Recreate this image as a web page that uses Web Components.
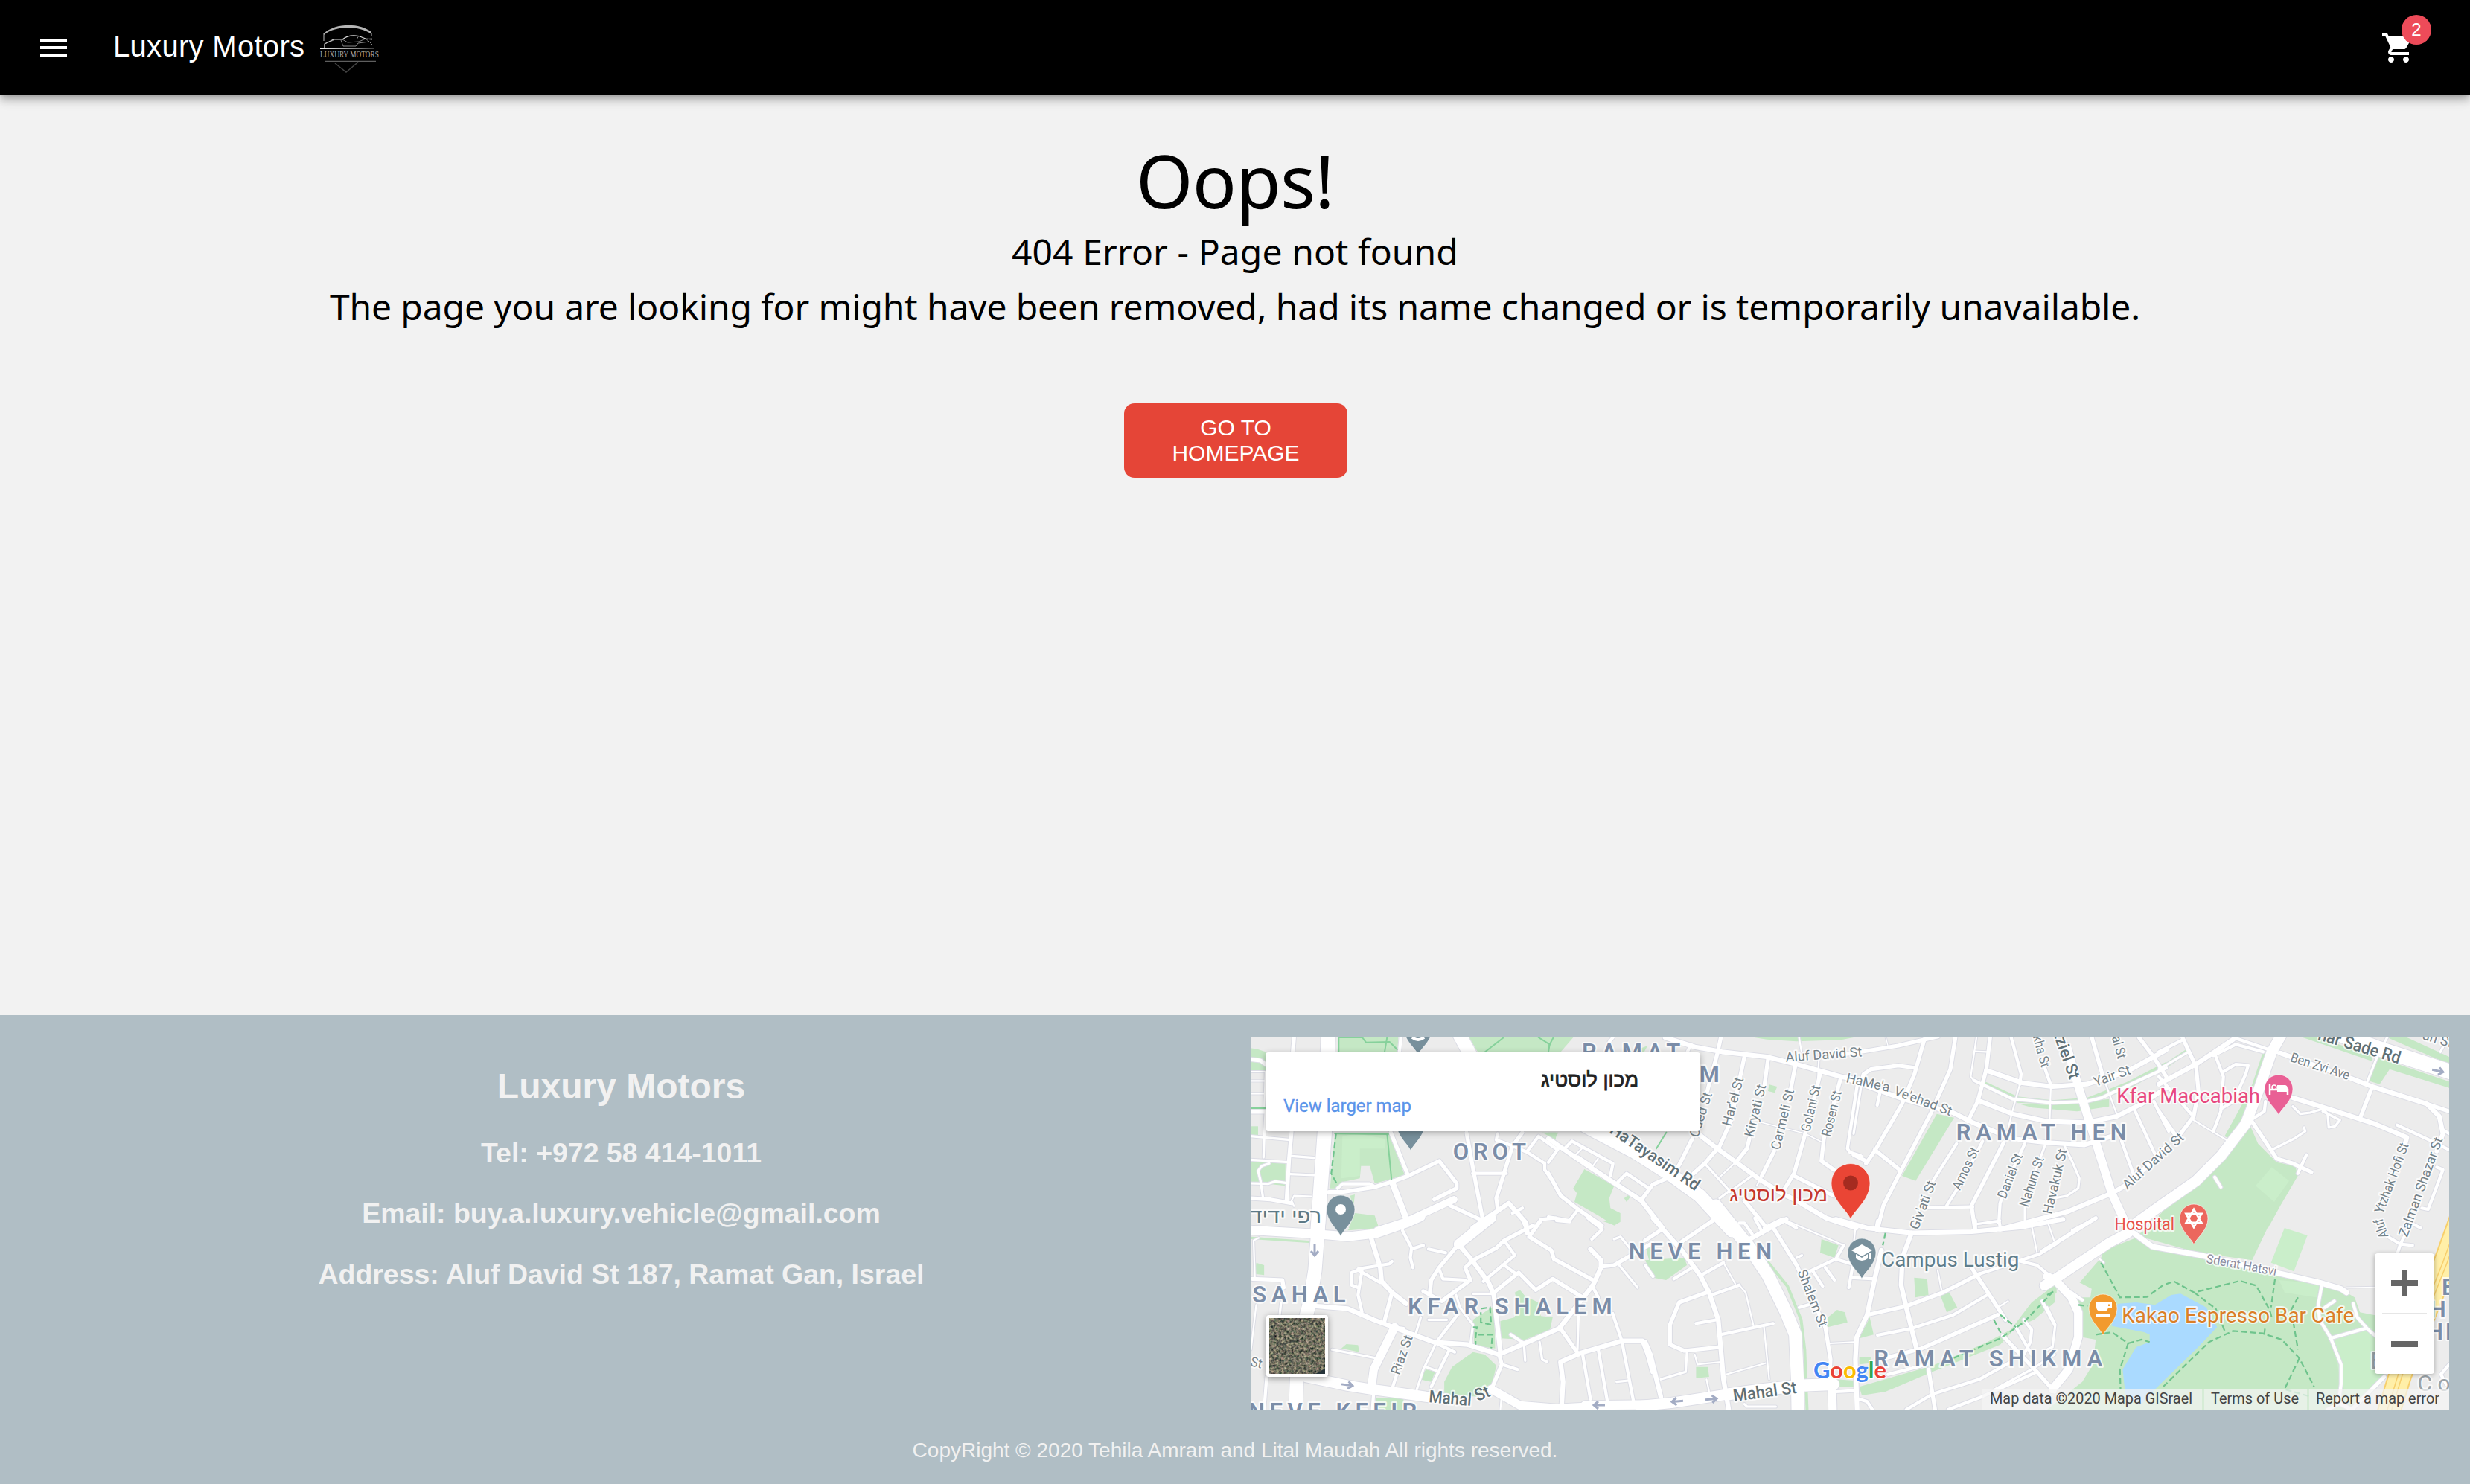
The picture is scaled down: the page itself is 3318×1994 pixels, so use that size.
<!DOCTYPE html>
<html lang="en">
<head>
<meta charset="utf-8">
<title>Luxury Motors</title>
<style>
html,body{margin:0;padding:0;background:#f2f2f2}
body{font-family:"Liberation Sans",Arial,sans-serif}
</style>
</head>
<body>
<lux-page></lux-page>
<script>
const define=(name,html,setup)=>customElements.define(name,class extends HTMLElement{
  constructor(){super();this.attachShadow({mode:'open'}).innerHTML=html;}
  connectedCallback(){if(setup)setup(this.shadowRoot,this);}
});

/* ---------- header ---------- */
define('lux-logo',`<style>:host{display:block;width:80px;height:68px}svg{display:block;overflow:visible}</style>
<svg width="80" height="68" viewBox="0 0 80 68" fill="none">
<defs><linearGradient id="l"><stop offset="0" stop-color="#eee"/><stop offset="1" stop-color="#555"/></linearGradient></defs>
<path d="M5 22V12M69 11v5" stroke="#777" stroke-width="1.600"/>
<path d="M5 12C20-2 52-3 69 10L69 13C52 1 21 1 5 14Z" fill="#b5b5b5"/>
<path d="M6 31V26L18 20 30 20C36 15 44 14 52 15.500L61 19 70 20" stroke="#ddd" stroke-width="1.200"/>
<path d="M6 26 18 21M62 19.500 70 19M30 20 37 24 52 23 61 19M28 21 31 29 48 29 51 25 66 23 71 28M52 15 49 20M61 19 66 23" stroke="#aaa" stroke-width=".8"/>
<path d="M0 31.200 72 32.200 72 33 0 33Z" fill="url(#l)"/>
<path d="M7 49.300H75" stroke="#777" stroke-width="1"/>
<path d="M20 52 35 64 51 50.500" stroke="#444" stroke-width="1.500"/>
<text x="0" y="44" font-family="Liberation Serif,serif" font-size="11.500" fill="#a9a9a9" textLength="79" lengthAdjust="spacingAndGlyphs">LUXURY MOTORS</text>
</svg>`);

define('lux-cart',`<style>:host{display:block;position:relative;width:48px;height:48px}
svg{display:block;width:48px;height:48px}
.b{position:absolute;left:28px;top:-20px;width:40px;height:40px;border-radius:50%;background:#ed4b59;color:#fff;font-size:24px;line-height:40px;text-align:center}</style>
<svg viewBox="0 0 24 24" fill="#fff"><path d="M7 18c-1.100 0-1.990.9-1.990 2S5.900 22 7 22s2-.9 2-2-.9-2-2-2zM1 2v2h2l3.600 7.590-1.350 2.450c-.16.280-.25.610-.25.960 0 1.100.9 2 2 2h12v-2H7.420c-.14 0-.25-.11-.25-.25l.03-.12.900-1.630h7.450c.75 0 1.410-.41 1.750-1.030l3.580-6.490c.08-.14.120-.31.120-.48 0-.55-.45-1-1-1H5.210l-.94-2H1zm16 16c-1.100 0-1.990.9-1.990 2s.89 2 1.990 2 2-.9 2-2-.9-2-2-2z"/></svg>
<div class="b"><slot></slot></div>`);

define('lux-header',`<style>:host{display:flex;align-items:center;height:128px;background:#000;color:#fff;box-sizing:border-box;padding:0 72px 0 48px;position:relative;
box-shadow:0 4px 8px -2px rgba(0,0,0,.2),0 8px 10px rgba(0,0,0,.14),0 2px 20px rgba(0,0,0,.12)}
.m{width:48px;height:48px;margin-right:56px}
.t{font-size:40px;letter-spacing:.3px;line-height:64px;margin-top:-4px}
lux-logo{margin:6px auto 0 21px}</style>
<svg class="m" viewBox="0 0 24 24" fill="#fff"><path d="M3 18h18v-2H3v2zm0-5h18v-2H3v2zm0-7v2h18V6H3z"/></svg>
<div class="t">Luxury Motors</div><lux-logo></lux-logo><lux-cart>2</lux-cart>`);

/* ---------- 404 message ---------- */
define('fit-line',`<style>:host{display:block;text-align:center;white-space:nowrap;font-family:"Noto Sans","Open Sans",sans-serif;color:#000}span{display:inline-block}</style><span><slot></slot></span>`,
(r,h)=>{const s=r.querySelector('span'),w=+h.getAttribute('width'),n=h.textContent.length;
 const ls=(w-s.getBoundingClientRect().width)/n;s.style.letterSpacing=ls+'px';});

define('not-found',`<style>:host{display:flex;flex-direction:column;align-items:center;height:1236px;box-sizing:border-box;padding-top:57px}
.a{font-size:98px;line-height:114px;height:114px}.b,.c{font-size:48px;line-height:74px;height:74px}.b{margin-top:2px}
a{display:flex;align-items:center;justify-content:center;box-sizing:border-box;width:300px;height:100px;margin:93px 0 0 2px;padding:0 40px;border-radius:14px;background:#e54537;color:#fff;font-size:30px;line-height:34px;text-align:center;text-decoration:none}</style>
<fit-line class="a" width="266">Oops!</fit-line>
<fit-line class="b" width="600">404 Error - Page not found</fit-line>
<fit-line class="c" width="2432">The page you are looking for might have been removed, had its name changed or is temporarily unavailable.</fit-line>
<a>GO TO HOMEPAGE</a>`);

/* ---------- map ---------- */
/* each sheet: x offset, y offset, x scale, y scale into map pixels */
const SHEET={A:[-10,-14,1/3,1/3],B:[400,-14,1/3,1/3],C:[810,-14,1/3,1/3],D:[1220,-14,1/3,1/3],
E:[-10,246,.35077,1/3],F:[530,246,.35077,1/3],G:[1070,246,.36224,1/3]};
const pt=(s,x,y)=>{const t=SHEET[s];return[+(t[0]+x*t[2]).toFixed(1),+(t[1]+y*t[3]).toFixed(1)];};
const poly=(s,d)=>d.trim().split(/\s+/).map(p=>pt(s,...p.split(',').map(Number)).join()).join(' ');

const GREEN={
A:`30,85 60,90 90,100 90,175 30,175|385,42 625,42 622,100 380,100|910,42 1260,42 1260,100 945,100|30,400 60,400 60,440 30,440|30,540 170,545 170,640 30,625|370,425 585,425 650,595 600,612 530,630 510,560 475,560 470,610 400,625 375,650 350,650|425,810 450,750 530,760 545,810|1205,425 1260,425 1260,455|430,680 450,675 445,720`,
B:`0,42 100,42 50,100 0,100|830,42 1230,42 1180,52 1000,58 880,50|145,420 210,425 480,600 480,615 380,540 300,490|145,573 265,640 245,690 250,730 290,750 290,785 265,800 210,765 105,705 115,670 100,650|0,425 40,425 25,455 0,445|890,232 922,240 912,265 885,258|305,690 325,675 330,685 315,705|375,85 400,75 380,110`,
C:`335,350 405,365 250,620 195,600|530,220 660,280 800,295 940,285 1100,222 1260,140 1260,165 1100,255 940,310 800,312 660,305 530,245|660,308 800,315 1030,290 1030,320 900,340 720,325|950,395 965,395 960,430|1240,770 1260,755 1260,780`,
D:`360,380 400,470 475,545 550,560 560,600 490,720 440,810 0,810 0,760 100,660 200,600 300,480|420,100 370,250 265,440 285,450 400,260 440,120|580,42 640,42 860,115 860,138|875,120 1170,220 1170,245 930,170 890,230 840,215 860,150|920,42 1000,42 1170,120 1170,150|5,160 110,90 110,110 10,180`,
E:`400,40 430,0 510,0 520,30|30,65 300,85 250,90 30,75|50,170 80,180 80,220 45,215|376,515 395,498 440,502 445,530|985,405 1040,390 1050,330 1040,290 1060,280 1080,305 1130,330 1140,385 1185,390 1175,440 1080,480 985,475|880,400 960,345 965,515 885,505|880,530 925,540 970,585 950,670 900,710 770,700 770,650 800,590|675,640 700,600 735,610 720,650|505,715 615,715 610,762 520,762|1370,0 1445,0 1420,18|1540,100 1568,110 1568,220`,
F:`0,160 150,150 160,180 80,240 30,230|675,75 740,100 725,150 670,130|700,390 735,360 765,370 775,410 700,430|860,390 875,460 820,475|1030,230 1080,235 1085,300 1035,310|1130,300 1165,290 1195,350 1155,370|195,590 240,590 245,630 195,635|830,705 820,670 1100,585 1300,495 1400,440 1480,330 1568,260 1568,330 1490,400 1420,430 1360,500 1100,610 920,690|820,550 865,550 860,575 820,580|730,640 800,645 800,670 735,670`,
G:`330,60 430,0 830,0 760,160 560,130|340,65 390,110 560,150 850,210 1010,250 1110,290 1140,310 1160,370 1230,385 1230,640 1130,762 0,762 130,650 170,580 180,480 130,470 110,330 120,310 160,310 165,275 120,250 200,150 210,120|0,280 35,270 35,290 0,330`};
const LIGHT={A:`400,440 460,430 570,450 570,490 470,490 470,600 395,610`,D:`455,565 525,620 465,705 390,640`,
G:`880,30 965,60 915,205 830,170|860,240 1010,255 1000,310 880,290|1055,480 1200,430 1250,500 1250,620 1130,762 1090,650`};
const WATER={G:`265,335 330,330 400,340 460,300 495,295 590,350 630,430 560,510 400,680 350,740 290,700 280,600 330,510 380,490 380,460 360,450 240,425 250,345`};
/* width in pixels, then the points of the line */
const ROADS={
A:`20 343,30 328,430 308,700 300,820|6 205,42 200,100|6 30,130 70,135 90,150|3 30,180 90,180|3 30,217 90,217|3 30,268 90,268|3 90,180 85,320|6 30,342 90,342|4 90,350 85,440 82,525|6 195,420 185,530 175,700|4 30,440 190,455|4 30,535 185,545|6 30,690 110,695 195,710|4 195,520 285,527|4 190,593 285,597|3 205,722 195,700 205,680 275,683|4 30,630 100,632 130,622 170,628|4 80,690 70,620 60,580 75,560 105,550|5 635,42 630,100|19 855,0 925,130|6 595,425 665,600|6 345,665 400,665 530,645 610,620 665,600 790,540 860,630 860,650 770,695|5 380,650 400,632 510,632 525,640|9 600,625 660,780|10 540,820 660,782 850,695|6 900,425 930,590 965,775|5 925,590 1060,590|6 1125,425 1085,480 1020,690 1025,730|5 1025,430 1020,455 1075,475 1145,505|5 1145,500 1190,440 1260,490|5 1145,505 1215,550 1215,575 1260,640|6 835,720 965,780|7 925,810 1070,710 1140,790 1145,830|5 1085,750 1125,730|5 1175,810 1200,775 1260,770`,
B:`19 150,400 350,505 500,600 610,680 740,820|7 470,42 590,80 700,100 880,120 1000,150 1180,200 1260,215|6 695,42 680,110 640,260|5 575,70 560,100|6 790,120 735,380 690,480 630,550 585,590|6 885,130 870,240|6 810,450 800,490 760,540|3 760,540 690,605|6 995,155 975,260|6 910,500 860,600|3 860,600 840,640|3 1090,130 1085,240|6 1095,190 1035,430 990,590 950,655|6 1180,200 1110,450 1100,540 1150,575|5 1245,230 1205,490 1215,505 1260,520|7 610,435 680,490 860,620 940,670 1000,700 1120,770 1240,810|2.5 860,385 1035,430 1105,465|4 630,550 730,660 690,690|4 820,600 730,665|6 990,600 1150,680|6 580,450 530,550 500,600 420,635 380,690|7 0,450 160,560 260,625 375,700 460,810|5 60,495 95,460 260,550 250,600|3 110,515 135,490|3 120,520 180,560 200,530|5 40,490 0,545|5 280,625 315,590 405,650|6 0,590 50,680 120,735 215,800|5 120,735 85,780 0,765|3 670,765 620,810|6 790,700 880,810|5 870,810 940,775 1000,810|3 1010,42 1020,100|5 260,42 245,60`,
C:`6 -40,110 40,98 180,75 340,38|2 130,42 138,75|6 285,50 245,190 195,310 85,500 50,550|6 410,42 390,170 310,350 185,590 120,720 95,820|6 30,230 40,190 70,170 180,155 250,165|4 30,240 0,430|5 105,270 95,315|6 0,515 50,540|6 85,495 185,575|6 550,42 535,170 500,300 460,380|3 495,42 472,200 485,215|5 485,215 640,290 800,305 940,300 1000,285 1150,215 1260,165|3 485,98 535,100|7 535,175 680,225 800,240 940,230 1100,180 1260,92|7 500,295 640,350 780,380 940,385 1060,360 1160,310 1260,245|5 635,42 675,190 670,230|3 670,230 640,340 625,400|5 765,150 795,235|3 795,235 790,380|6 960,42 1005,200|3 1005,200 1060,350|6 1150,42 1205,115 1260,200|7 -10,215 200,290 400,345 480,385 640,450 770,465 930,475 1040,440|12 860,80 900,220 940,350 1000,540 1040,670 1100,800|5 415,470 320,620|5 520,460 450,600 375,720|6 605,465 475,720 490,820|5 300,728 480,725|5 690,470 630,600 590,710 585,790|4 490,795 590,780|4 770,480 690,700 690,800|4 850,480 880,540 910,610 905,650 860,680 810,690|7 590,815 860,745 1040,670 1120,625 1260,480|5 1080,460 1130,600|5 1130,330 1220,525|5 1210,300 1270,420|4 880,820 965,775`,
D:`21 560,-30 700,18 880,85 1180,182|15 495,30 455,100 400,260 350,390 250,520 150,620 0,725 -90,790|6 95,42 150,160 160,260 140,360 80,440|5 0,100 100,50|7 0,230 150,150 300,50|4 0,170 120,100|5 220,115 310,70 420,100|5 300,42 500,110|5 230,120 260,200 250,340 220,420|5 260,180 310,150 360,155 350,190 300,300 250,330|5 0,200 130,350|6 0,340 70,440|3 140,375 280,460|7 490,105 770,205 860,240 1080,310 1130,360 1145,430 1120,500|6 1080,310 1170,340|4 880,120 840,220|6 860,240 810,370|4 920,42 905,70|7 540,285 700,335 870,390 1000,445 990,480|5 370,375 425,340 430,300|6 375,380 475,530 540,550 615,585|5 595,515 560,590|4 455,495 545,450 590,420 585,405|4 540,320 570,350 610,345 660,330 680,350 685,405 710,400 730,375 660,340|5 225,605 250,645|5 960,395 1100,460 1170,495|5 1145,415 1170,430|5 1120,565 1145,575 1085,735 1060,730|4 1135,100 1145,80`,
E:`13 20,38 250,52 400,65 510,52 630,8 680,-15|19 290,-10 275,200 255,330 230,430 205,640 200,775|6 35,235 150,240 155,270|3 45,240 40,80 60,70|3 50,340 30,520|4 145,330 140,380|7 280,345 400,355 500,400 600,440 730,490 860,500 980,540|15 240,630 400,665 490,680 600,695 700,710 780,720|12 490,680 500,600 580,430|7 490,70 525,190 530,245 570,290 625,335|5 525,250 440,200 415,210 415,260 440,270|5 570,165 560,175 440,195|5 455,200 440,300 455,370|6 570,290 540,410|5 580,430 615,435|5 610,40 645,110 640,150 650,190|5 645,115 690,100|5 710,115 775,130|6 825,95 750,190 720,240 715,290|14 825,95 950,-10|7 825,95 880,165 940,250 960,300 985,530|5 750,195 765,235 850,240|6 880,160 850,190 870,240 760,325 690,285|6 880,160 970,110 1000,80 1110,20|5 1000,80 1040,140 920,245|5 1000,180 1045,215|6 960,290 1055,210 1120,280 1185,235 1300,310|4 880,295 955,295|6 1140,0 1095,65 1180,120 1190,155 1340,240|5 1070,0 1095,60|5 1200,0 1250,5|5 1320,-10 1375,35 1335,75|7 1330,115 1370,160 1370,190 1340,260 1210,435 980,540|6 1375,185 1420,180 1568,90|4 1440,180 1510,270|4 1420,75 1445,65 1480,110|5 1335,260 1360,310|4 1285,370 1280,520|6 1215,435 1285,540|7 1220,740 1225,650 1215,570 1290,535 1450,485 1530,485 1550,540 1568,610|5 1300,540 1330,720|5 1360,520 1395,730|5 1415,375 1450,485 1495,730|4 1430,650 1475,645|6 980,540 990,580 955,670|5 990,580 1050,600|12 950,680 1060,745 1200,757 1320,750|13 1310,745 1568,742|4 1075,495 1080,565|4 1135,490 1145,560 1165,570|5 1025,460 1075,495|4 740,490 690,600 665,680|5 790,520 720,670|5 730,490 810,530|4 700,590 740,605|5 820,380 740,490|4 680,390 660,460|4 815,300 830,350 880,420 870,500|4 710,400 780,400|4 340,520 510,555|5 600,580 570,680|5 90,630 80,762|5 500,690 495,762|3 990,700 985,762`,
F:`18 270,-60 300,-20 400,110 470,220 540,370 575,460 583,640 585,775|15 -20,747 100,735 320,700|17 320,700 460,680 600,665 720,660|12 715,655 718,775|5 730,690 810,685|7 812,770 805,560 810,470 850,380 880,230 905,120|6 690,430 710,560 705,650|6 485,20 580,180 690,430|5 420,-10 450,50|7 400,75 540,-5|5 360,10 380,10 410,55|3 540,0 760,100|7 730,-5 850,30 1020,50 1250,45 1450,25 1600,-5|5 890,0 885,30|5 1265,0 1265,45|5 1355,0 1360,30|3 1265,15 1355,5|3 1480,20 1500,125|7 1020,50 985,150 980,260 1000,350 1040,520|6 850,380 1000,345 1140,290 1280,215|5 890,462 1020,435 1180,380 1310,300|6 920,555 1060,515 1200,450 1350,380|6 1250,190 1350,350 1380,400|3 1350,350 1390,325|5 1280,215 1440,160 1510,135 1580,90|5 1440,165 1500,180 1568,240|6 1370,465 1500,610 1568,690|5 1420,430 1480,540|5 1450,400 1480,440 1475,490 1450,540|5 1520,325 1568,420|5 930,620 1080,580|6 1085,600 1110,762|5 1000,762 1100,700 1280,640 1400,570|5 1160,762 1290,710 1500,610|4 1340,680 1480,600 1568,540|5 820,720 850,730 870,762|5 760,100 730,155 610,215|5 730,155 790,175|5 780,270 795,180|5 790,230 880,235|5 640,200 680,265|5 690,190 725,240|4 580,150 600,140|5 590,350 625,340|7 30,-10 140,120 210,220 245,290 280,400 300,640 320,762|6 0,80 65,35|6 140,85 260,0|5 215,220 300,170|5 255,300 360,260|3 360,260 385,290 415,425|6 235,290 130,330 95,420 95,500 150,525 285,510|5 195,415 275,400|5 290,460 490,415|3 455,430 475,640|4 160,530 155,610 60,640|3 190,540 200,580 290,570|3 310,620 460,575|7 0,490 20,540 60,710|5 0,180 30,225|5 110,235 180,190|4 380,740 390,750 500,750|3 300,170 345,255|3 805,30 800,80|3 705,495 800,490|3 1120,200 1135,280|3 235,640 245,690`,
G:`14 -10,262 30,235 230,90 300,50|6 -20,125 180,-10|3 0,0 25,80|8 320,50 390,105 570,140 850,210 1010,250 1090,275 1110,290|12 0,225 30,240 90,310 115,370 115,470 80,600 20,680|4 0,350 30,420 20,510 0,520|5 90,290 130,320|5 1020,250 1005,340 1010,400 1050,470 1090,580 1090,660 1080,740 1040,762|5 1050,475 1180,435|5 1135,335 1150,390 1190,440 1240,485|5 1030,350 1065,325|6 1090,740 1130,762 1250,630|2 1110,270 1220,268|5 1240,50 1310,95 1355,100|5 1295,145 1310,95 1350,10 1385,30|3 195,155 210,170|5 1491,580 1460,620 1480,660`};
const PATHS={A:`385,42 385,100|385,42 480,42 495,62 590,60 620,90|580,42 570,100|1050,42 975,100|1190,42 1235,70 1230,100|30,327 90,327|370,430 585,432|580,430 598,615`,
B:`475,425 435,490|0,80 20,42`};
const DASHES={A:`374,430 355,590 382,640`,
E:`910,355 945,350 950,420 910,410 910,370|880,430 895,430 890,470 890,500|900,460 955,460 950,515`,
F:`1180,555 1360,475 1450,410 1568,280|1335,400 1365,460|1360,380 1420,430|920,50 910,100`,
G:`200,170 270,310 370,308 430,260 470,245 545,290 715,243 775,262 825,360 835,400|545,290 625,355 660,450|845,235 830,350|430,670 600,490 690,445 800,455 870,480 935,555 990,670|930,310 905,360 930,520|935,555 880,680 970,708|180,460 240,450 300,495 270,600 272,680|300,495 350,480 380,490|115,340 150,345|805,460 808,430|0,300 25,285`};

const AREA='#7b8da8',STREET='#75838a',ROADNAME='#5f7076';
const between=(a,b)=>[...pt(...a),...pt(...b)];
/* text, baseline start and end, size, colour, weight */
const LABELS=[
['OROT',['A',845,535],['A',1140,535],31,AREA,600,1],['RAMAT',['B',135,133],['B',532,133],31,AREA,600,1],['M',['B',608,222],['B',675,222],31,AREA,600,1],
['RAMAT HEN',['C',413,457],['C',1100,457],31,AREA,600,1],['SAHAL',['E',35,330],['E',392,330],31,AREA,600,1],['KFAR SHALEM',['E',630,378],['E',1413,378],31,AREA,600,1],
['NEVE HEN',['E',1476,157],['F',485,157],31,AREA,600,1],['NEVE KFEIR',['E',20,802],['E',665,802],31,AREA,600,1],['RAMAT SHIKMA',['F',876,587],['G',205,587],31,AREA,600,1],
['E',['G',1463,300],['G',1510,300],31,AREA,600,1],['H',['G',1418,390],['G',1464,390],31,AREA,600,1],['HE',['G',1408,480],['G',1525,480],31,AREA,600,1],
['E',['G',1198,598],['G',1240,598],32,'#9ba3a8',400,1],['Co',['G',1373,688],['G',1495,688],30,'#9ba3a8',400,1],
['Aluf David St',['B',957,140],['C',35,118],18],["Har'el St",['B',735,402],['B',787,208],18],['Kiryati St',['B',826,446],['B',877,236],18],['Carmeli St',['B',932,498],['B',990,256],18],
['Golani St',['B',1053,425],['B',1097,240],18],['Rosen St',['B',1136,445],['B',1182,262],18],['Oded St',['B',603,448],['B',660,270],18],
['HaTayasim Rd',['B',243,424],['B',592,661],22,ROADNAME,500],["HaMe'a",['B',1198,222],['C',142,262],18],["Ve'ehad St",['C',160,272],['C',388,358],18],
["Giv'ati St",['F',1045,40],['C',332,628],18],['Amos St',['C',428,660],['C',507,496],18],['Daniel St',['C',613,695],['C',682,518],18],['Nahum St',['C',703,728],['C',767,530],18],['Havakuk St',['C',798,757],['C',860,496],18],
['Uzziel St',['C',788,-20],['C',870,214],22,ROADNAME,500],['kha St',['C',722,38],['C',757,165],18],['al St',['C',1040,42],['C',1065,130],18],['Yair St',['C',975,240],['C',1120,188],18],['Aluf David St',['C',1103,657],['D',105,450],18],
['Ben Zvi Ave',['D',527,138],['D',762,213],18],['har Sade Rd',['D',638,50],['D',967,148],23,ROADNAME,500],['an St',['D',1060,48],['D',1178,84],18],
['Ytzhak Hofi St',['D',903,755],['D',1008,475],18],['Aluf',['G',1266,64],['D',900,768],18],['Zalman Shazar St',['G',1335,70],['D',1145,452],18],
['Shalem St',['F',583,207],['F',667,432],18],['Mahal St',['F',340,730],['F',582,695],23,ROADNAME,500],['Mahal',['E',710,733],['E',872,747],23,ROADNAME,500],['St',['E',898,730],['E',950,706],23,ROADNAME,500],
['Riaz St',['E',598,625],['E',650,470],18],['St',['E',26,586],['E',68,596],18],['Sderat Hatsvi',['G',588,170],['G',848,222],17,'#8c8c9e'],
['Kfar Maccabiah',['C',1060,305],['D',408,305],27,'#e8487f',400],['Hospital',['G',250,40],['G',472,40],24,'#e8514a',400],['Campus Lustig',['F',904,186],['F',1432,186],27,'#607d8b',400],
['Kakao Espresso Bar Cafe',['G',277,412],['G',1138,412],27,'#db7f28',400],
['מכון לוסטיג',['B',730,702],['B',1125,702],27,'#c5372c',400],['רפי ידיד',['A',28,790],['A',315,790],27,'#5d7a87',400]];

const pin=(x,y,tip,r,c,icon='')=>{const h=tip-y;
 return `<path d="M${x} ${tip}C${x-r*.25} ${y+h*.72} ${x-r} ${y+r*.85} ${x-r} ${y}A${r} ${r} 0 0 1 ${x+r} ${y}C${x+r} ${y+r*.85} ${x+r*.25} ${y+h*.72} ${x} ${tip}Z" fill="${c}" stroke="#fff" stroke-opacity=".6" stroke-width="1"/><g transform="translate(${x} ${y})">${icon}</g>`;};
const mark=(x,y,a)=>`<path transform="translate(${x} ${y}) rotate(${a})" d="M-8 0H6M1-5 7 0 1 5" fill="none" stroke="#a3acc4" stroke-width="3"/>`;

function drawMap(){
 const shapes=(set,fill)=>Object.entries(set).map(([s,v])=>v.split('|').map(d=>`<polygon points="${poly(s,d)}" fill="${fill}"/>`).join('')).join('');
 const lines=(set,attr)=>Object.entries(set).map(([s,v])=>v.split('|').map(d=>`<polyline points="${poly(s,d)}" ${attr}/>`).join('')).join('');
 const roads=(extra,col)=>Object.entries(ROADS).map(([s,v])=>v.split('|').map(r=>{const i=r.indexOf(' '),w=+r.slice(0,i);
   return `<polyline points="${poly(s,r.slice(i+1))}" stroke="${col}" stroke-width="${w-.8+extra}"/>`;}).join('')).join('');
 const hwy=poly('G','1262,790 1310,620 1475,170 1545,-40');
 const labels=LABELS.map(([t,a,b,size,c=STREET,w=400,area])=>{const[x0,y0,x1,y1]=between(a,b);
   const len=Math.hypot(x1-x0,y1-y0),ang=Math.atan2(y1-y0,x1-x0)*180/Math.PI,he=/[\u0590-\u05ff]/.test(t);
   return `<text transform="translate(${x0} ${y0}) rotate(${ang.toFixed(1)})" font-size="${size}" fill="${c}" font-weight="${w}" ${t.length>1?`textLength="${len.toFixed(1)}" lengthAdjust="${area?'spacing':'spacingAndGlyphs'}"`:''} ${he?'font-family="Liberation Sans,DejaVu Sans,sans-serif"':''}>${t}</text>`;}).join('');
 return `<svg width="1610" height="500" viewBox="0 0 1610 500">
 <rect width="1610" height="500" fill="#ececec"/>${shapes(GREEN,'#c5e8c5')}${shapes(LIGHT,'#caeeca')}${shapes(WATER,'#aadaff')}
 <g fill="none" stroke="#c5e8c5" stroke-width="4"><polyline points="${poly('F','468,165 545,265 597,400 611,520 620,765')}"/></g>
 <g fill="none" stroke-linejoin="round" stroke-linecap="round">${roads(2,'#dcdde5')}${roads(0,'#fff')}
 ${lines(PATHS,'stroke="#86d19b" stroke-width="2"')}</g>
 <g fill="none" stroke="#6fc48d" stroke-width="2.200" stroke-dasharray="8 4">${lines(DASHES,'')}</g>
 <g fill="none"><polyline points="${hwy}" stroke="#f7cf6c" stroke-width="32"/><polyline points="${hwy}" stroke="#ffefa8" stroke-width="28"/><polyline points="${hwy}" stroke="#f7cf6c" stroke-width="7"/><polyline points="${hwy}" stroke="#ffefa8" stroke-width="4"/></g>
 ${mark(86,286,90)}${mark(130,467,8)}${mark(468,494,180)}${mark(573,489,175)}${mark(619,486,-5)}${mark(1595,45,12)}
 <g font-family="Roboto,sans-serif" stroke="#fff" stroke-opacity=".75" stroke-width="4" stroke-linejoin="round" paint-order="stroke">${labels}</g>
 ${pin(225,-12,23,19,'#78909c','<path d="M-8 12Q0 18 8 12" fill="none" stroke="#fff" stroke-width="4"/>')}
 ${pin(215,116,152,19,'#78909c')}
 ${pin(121,231,267,19,'#78909c','<circle r="7" fill="#fff"/>')}
 ${pin(821,289,324,19,'#78909c','<path d="M-14-3 0-11 14-3 0 5ZM-8 2V8Q0 14 8 8V2L0 7ZM10 0h2.500V9H10Z" fill="#fff"/>')}
 ${pin(1381,69,104,19,'#e96095','<path d="M-12-7V8M12 8V1H-12" fill="none" stroke="#fff" stroke-width="2.500"/><path d="M-2-5H8Q12-5 12 0V4H-2Z" fill="#fff"/><circle cx="-6" cy="-2" r="3" fill="none" stroke="#fff" stroke-width="1.600"/>')}
 ${pin(1267,243,278,19,'#ec675d','<path d="M0-12 10.400 6H-10.400ZM0 12-10.400-6H10.400Z" fill="none" stroke="#fff" stroke-width="2.800"/>')}
 ${pin(1145,364,400,19,'#f29a2e','<path d="M-9-8H12V-1H7Q6 4 1 4H-4Q-9 3-9-2ZM-10 8H10V11H-10Z" fill="#fff"/><path d="M7-5.500h2.500V-3H7Z" fill="#f29a2e"/>')}
 ${pin(806,195.5,244,26,'#ea4535','<circle r="10" fill="#a52b20"/>')}
 <text x="756" y="457.500" font-family="Lato,sans-serif" font-weight="700" font-size="30" textLength="98" lengthAdjust="spacingAndGlyphs" stroke="#fff" stroke-width="2.500" paint-order="stroke"><tspan fill="#4285f4">G</tspan><tspan fill="#ea4335">o</tspan><tspan fill="#fbbc05">o</tspan><tspan fill="#4285f4">g</tspan><tspan fill="#34a853">l</tspan><tspan fill="#ea4335">e</tspan></text>
 </svg>`;
}

define('map-card',`<style>:host{display:block;position:absolute;left:20px;top:20px;width:584px;height:106px;border-radius:4px;background:#fff;box-shadow:0 2px 8px rgba(0,0,0,.3)}svg{display:block}</style>
<svg width="584" height="106"><text x="370" y="46" font-size="27" textLength="131" lengthAdjust="spacingAndGlyphs" fill="#222" stroke="#222" stroke-width=".8" font-family="Liberation Sans,sans-serif">מכון לוסטיג</text>
<text x="24" y="80" font-size="24" textLength="172" lengthAdjust="spacingAndGlyphs" fill="#5a94ea" stroke="#5a94ea" stroke-width=".3" font-family="Roboto,sans-serif">View larger map</text></svg>`);

define('map-zoom',`<style>:host{display:flex;flex-direction:column;align-items:center;position:absolute;left:1510px;top:290px;width:80px;height:162px;border-radius:4px;background:#fff;box-shadow:0 1px 6px rgba(0,0,0,.3)}svg{display:block;width:80px;height:80px}hr{width:60px;margin:0;border:0;border-top:2px solid #e6e6e6}</style>
<svg viewBox="0 0 80 80"><path d="M22 40H58M40 22V58" stroke="#666" stroke-width="8"/></svg><hr><svg viewBox="0 0 80 80"><path d="M22 40H58" stroke="#666" stroke-width="8"/></svg>`);

define('map-satellite',`<style>:host{display:block;position:absolute;left:21px;top:373px;width:75px;height:75px;border:4px solid #fff;border-radius:4px;box-shadow:0 2px 9px rgba(0,0,0,.4);overflow:hidden}svg{display:block}</style>
<svg width="75" height="75"><filter id="n" x="0" y="0" width="1" height="1" color-interpolation-filters="sRGB"><feTurbulence type="fractalNoise" baseFrequency=".3" numOctaves="4" seed="8"/><feColorMatrix values=".9 .2 0 0 -.11 .7 .35 0 0 -.09 .6 .2 .1 0 -.08 0 0 0 0 1"/></filter>
<rect width="75" height="75" filter="url(#n)"/><path d="M0 24 18 36 32 62M18 36 40 28" stroke="#444b4a" stroke-opacity=".5" fill="none" stroke-width="2"/><path d="M62 75 75 68V75Z" fill="#26343a"/></svg>`);

define('map-credits',`<style>:host{display:block;position:absolute;left:982px;top:472px;width:628px;height:28px;background:rgba(245,245,245,.7)}svg{display:block}</style>
<svg width="628" height="28" font-family="Roboto,sans-serif" font-size="20" fill="#444"><text x="11" y="20" textLength="272" lengthAdjust="spacingAndGlyphs">Map data ©2020 Mapa GISrael</text><text x="308" y="20" textLength="118" lengthAdjust="spacingAndGlyphs">Terms of Use</text><text x="449" y="20" textLength="166" lengthAdjust="spacingAndGlyphs">Report a map error</text><path d="M297.500 0V28M438.500 0V28" stroke="#c5e8c5" stroke-width="2"/></svg>`);

define('lux-map',`<style>:host{display:block;position:relative;width:1610px;height:500px;overflow:hidden}.m svg{display:block}</style>
<div class="m">${drawMap()}</div><map-card></map-card><map-satellite></map-satellite><map-zoom></map-zoom><map-credits></map-credits>`);

/* ---------- footer ---------- */
define('lux-footer',`<style>:host{display:flex;flex-direction:column;height:630px;box-sizing:border-box;background:#b0bec5;color:#f1f1f1;padding:30px 28px 0 0}
.row{display:flex;justify-content:space-between}
.info{width:1669px;text-align:center;padding-top:39px}
h2,h3{margin:0;font-weight:700}h2{font-size:48px;line-height:54px;margin-bottom:41px}h3{font-size:37.440px;line-height:42px;margin-bottom:39.400px}
.copy{width:3318px;text-align:center;font-size:28px;line-height:32px;margin-top:39px}</style>
<div class="row"><div class="info"><h2>Luxury Motors</h2><h3>Tel: +972 58 414-1011</h3><h3>Email: buy.a.luxury.vehicle@gmail.com</h3><h3>Address: Aluf David St 187, Ramat Gan, Israel</h3></div><lux-map></lux-map></div>
<div class="copy">CopyRight © 2020 Tehila Amram and Lital Maudah All rights reserved.</div>`);

define('lux-page',`<style>:host{display:flex;flex-direction:column;width:3318px;height:1994px;overflow:hidden}</style><lux-header></lux-header><not-found></not-found><lux-footer></lux-footer>`);
</script>
</body>
</html>
